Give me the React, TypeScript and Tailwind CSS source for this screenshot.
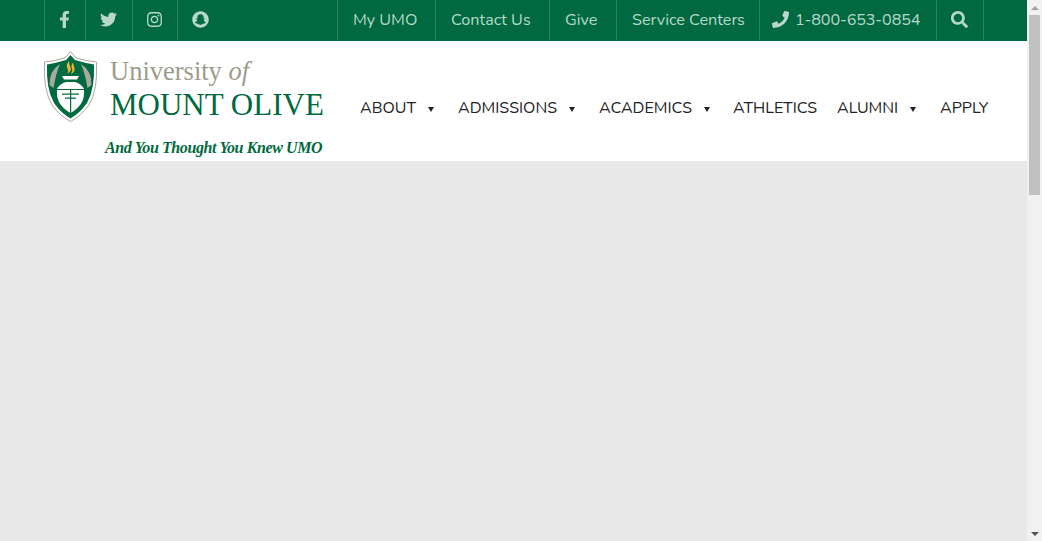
import React from "react";
import { FaFacebookF, FaTwitter, FaInstagram, FaSnapchat, FaPhone, FaSearch } from "react-icons/fa";

const sep = "border-l border-[#2f8260] h-10";

function Shield() {
  return (
    <svg width="54" height="71" viewBox="44 51 54 71" className="shrink-0">
      <path d="M70.5 51.5 L76 58 Q86 61 96.5 62 Q98 90 89 105 Q81 116 70.5 121.500 Q60 116 52 105 Q43 90 44.500 62 Q55 61 65 58 Z" fill="#fff" stroke="#a9a99b" strokeWidth="1" />
      <path d="M70.5 55 L75 60 Q85 63 94 64.500 Q95 89 87 103 Q80 113 70.500 118.500 Q61 113 54 103 Q46 89 47 64.500 Q56 63 66 60 Z" fill="#006b41" />
      <path d="M49.500 85 Q49 71 60 64 Q56 73 53.500 88 Z" fill="#a9a99b" />
      <path d="M91.500 85 Q92 71 81 64 Q85 73 87.500 88 Z" fill="#a9a99b" />
      <path d="M69 61 Q65.500 65 67.500 68.500 Q69 71 67.500 73.500 Q72 71 70.500 67.500 Q69 64.500 69 61 Z M73 62.500 Q70.500 66 72 68.500 Q73 71 70.500 74 Q75.500 72 74.500 68 Q73.500 65.500 73 62.500 Z" fill="#f1b434" />
      <path d="M62 76 H79 L77 79.500 H64 Z" fill="#fff" />
      <path d="M57 89 Q60 83.500 66 82 H75 Q81 83.500 84 89 Z" fill="#fff" />
      <path d="M57 90 H84 Q84.500 97 82 102 Q78 109 70.500 113 Q63 109 59 102 Q56.500 97 57 90 Z" fill="#fff" />
      <path d="M70 90 H71.200 V113 H70 Z M62 93.500 H79 V94.800 H62 Z M65 97.500 H76 V98.700 H65 Z" fill="#006b41" />
    </svg>
  );
}

function Caret() {
  return <span className="ml-[12px] mt-[2px] w-0 h-0 border-l-[3.5px] border-r-[3.5px] border-t-[5px] border-l-transparent border-r-transparent border-t-[#222]" />;
}

export default function App() {
  const social = [
    { w: "w-[41px]", icon: <FaFacebookF size={17} />, pos: "justify-center pr-[2px]" },
    { w: "w-[47px]", icon: <FaTwitter size={17} />, pos: "justify-center pr-[2px]" },
    { w: "w-[45px]", icon: <FaInstagram size={17} />, pos: "justify-center pr-[1px]" },
    { w: "w-[160px]", icon: <FaSnapchat size={17} />, pos: "justify-start pl-[14px]" },
  ];
  const links = [
    { w: "w-[98px]", label: "My UMO" },
    { w: "w-[114px]", label: "Contact Us" },
    { w: "w-[67px]", label: "Give" },
    { w: "w-[143px]", label: "Service Centers" },
  ];
  const nav = [
    { w: "w-[98px]", label: "ABOUT", caret: true },
    { w: "w-[141px]", label: "ADMISSIONS", caret: true },
    { w: "w-[134px]", label: "ACADEMICS", caret: true },
    { w: "w-[104px]", label: "ATHLETICS", caret: false },
    { w: "w-[103px]", label: "ALUMNI", caret: true },
    { w: "w-[60px]", label: "APPLY", caret: false },
  ];
  return (
    <div className="flex h-[541px] w-[1042px] overflow-hidden font-['Nunito','Lato','Open_Sans',sans-serif]">
      <div className="flex-1 flex flex-col min-w-0 bg-[#e8e8e8]">
        <div className="h-[41px] bg-[#006940] pl-[44px] flex items-start text-[#b7d8ca] text-[16.200px]">
          {social.map((s, i) => (
            <div key={i} className={`${s.w} ${sep} flex items-center ${s.pos} pb-[1px]`}>
              {s.icon}
            </div>
          ))}
          {links.map((l) => (
            <div key={l.label} className={`${l.w} ${sep} flex items-center pl-[15px] whitespace-nowrap`}>{l.label}</div>
          ))}
          <div className={`w-[177px] ${sep} flex items-center pl-[12px] gap-[6px] whitespace-nowrap`}>
            <span className="pb-[1px]"><FaPhone size={17} /></span>
            <span className="tracking-[-0.15px]">1-800-653-0854</span>
          </div>
          <div className={`w-[48px] ${sep} flex items-center justify-center pr-[2px] pb-[1px] border-r`}>
            <FaSearch size={17} />
          </div>
        </div>
        <div className="h-[120px] bg-white pl-[44px] flex">
          <div className="w-[316px] shrink-0 flex pt-[10px]">
            <Shield />
            <div className="flex flex-col">
              <div className="ml-[12px] h-[38px] pt-[1px] text-[26.500px] leading-[38px] text-[#9c9c8c] font-['Liberation_Serif',serif] whitespace-nowrap">
                University <i>of</i>
              </div>
              <div className="ml-[12px] h-[32px] text-[31px] leading-[32px] text-[#006940] font-['Liberation_Serif',serif] whitespace-nowrap">
                MOUNT OLIVE
              </div>
              <div className="ml-[7px] mt-[17px] text-[16px] leading-[20px] tracking-[-0.4px] text-[#006940] font-['Liberation_Serif',serif] font-bold italic whitespace-nowrap">
                And You Thought You Knew UMO
              </div>
            </div>
          </div>
          <nav className="flex items-center pt-[14px] text-[16px] text-[#222]">
            {nav.map((n) => (
              <div key={n.label} className={`${n.w} flex items-center whitespace-nowrap`}>
                {n.label}
                {n.caret && <Caret />}
              </div>
            ))}
          </nav>
        </div>
      </div>
      <div className="w-[15px] shrink-0 bg-[#f1f1f1] flex flex-col items-stretch">
        <div className="h-[15px] flex items-center justify-center">
          <span className="w-0 h-0 border-l-[4px] border-r-[4px] border-b-[4px] border-l-transparent border-r-transparent border-b-[#a3a3a3]" />
        </div>
        <div className="h-[180px] ml-[2px] mr-[2px] bg-[#c1c1c1]" />
        <div className="flex-1" />
        <div className="h-[15px] flex items-center justify-center">
          <span className="w-0 h-0 border-l-[4px] border-r-[4px] border-t-[4px] border-l-transparent border-r-transparent border-t-[#505050]" />
        </div>
      </div>
    </div>
  );
}
